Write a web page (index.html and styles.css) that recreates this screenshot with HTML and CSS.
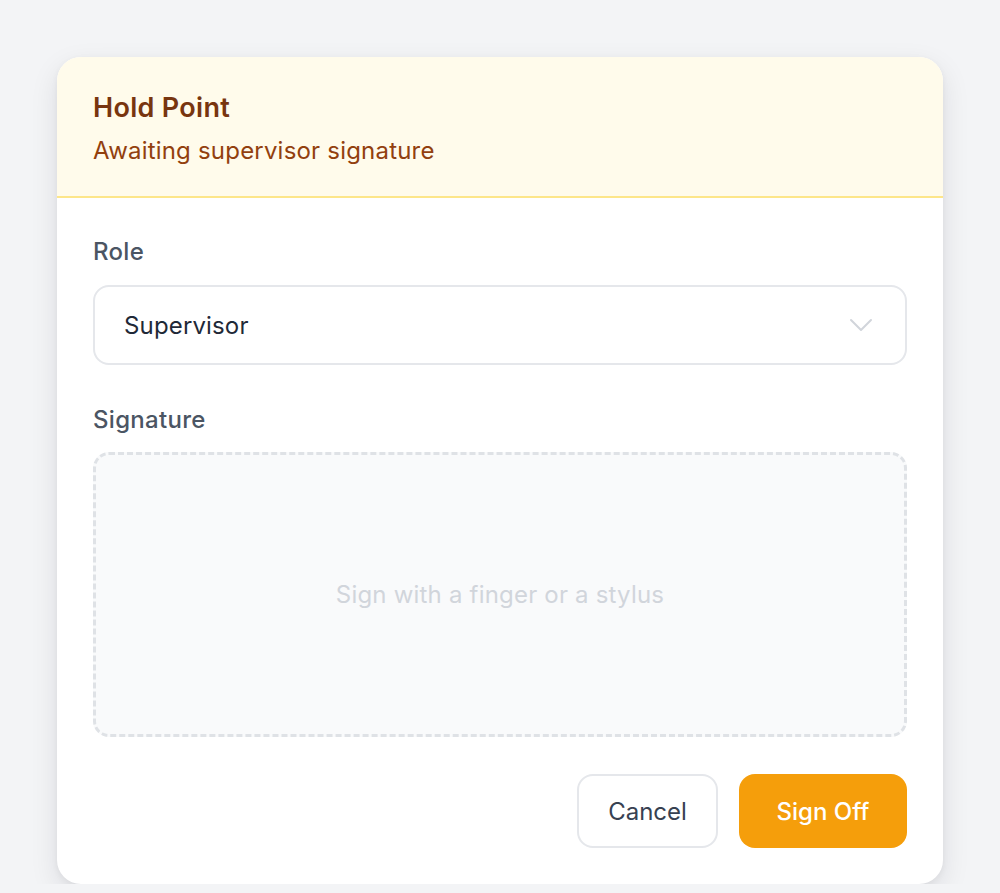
FILE: index.html
```html
<!DOCTYPE html>
<html>
  <head>
    <title>Hold Point</title>
    <link rel="stylesheet" href="styles.css">
  </head>
  <body>
    <div class="card">
      <div class="card-header">
        <h2 class="card-title">Hold Point</h2>
        <p class="card-subtitle">Awaiting supervisor signature</p>
      </div>
      <div class="card-body">
        <label class="field-label" for="role">Role</label>
        <div class="select">
          <span class="select-value" id="role">Supervisor</span>
          <svg class="select-chevron" width="24" height="14" viewBox="0 0 24 14" fill="none">
            <path d="M2 2l10 10L22 2" stroke="#d1d5db" stroke-width="2" stroke-linecap="round" stroke-linejoin="round"/>
          </svg>
        </div>

        <label class="field-label field-label-spaced">Signature</label>
        <div class="signature-pad">
          <span class="signature-hint">Sign with a finger or a stylus</span>
        </div>

        <div class="actions">
          <button class="btn btn-secondary">Cancel</button>
          <button class="btn btn-primary">Sign Off</button>
        </div>
      </div>
    </div>
  </body>
</html>
```

FILE: styles.css
```css
body {
  margin: 0;
  padding: 57px 57px 0;
  background-color: #f3f4f6;
  font-family: Inter, "Noto Sans", sans-serif;
}

.card {
  background-color: #fff;
  border-radius: 24px;
  overflow: hidden;
  box-shadow: 0 10px 28px rgba(17, 24, 39, 0.1), 0 2px 6px rgba(17, 24, 39, 0.05);
}

.card-header {
  background-color: #fffbeb;
  border-bottom: 2px solid #fde68a;
  padding: 33px 36px 29px;
}

.card-title {
  margin: 0;
  font-size: 27px;
  line-height: 36px;
  font-weight: 600;
  letter-spacing: 0.3px;
  color: #78350f;
}

.card-subtitle {
  margin: 9px 0 0;
  font-size: 24px;
  line-height: 32px;
  letter-spacing: 0.2px;
  color: #92400e;
}

.card-body {
  padding: 38px 36px 36px;
}

.field-label {
  display: block;
  font-size: 24px;
  line-height: 32px;
  font-weight: 500;
  letter-spacing: 0.3px;
  color: #4b5563;
  margin-bottom: 17px;
}

.field-label-spaced {
  margin-top: 39px;
  margin-bottom: 16px;
}

.select {
  display: flex;
  align-items: center;
  justify-content: space-between;
  height: 80px;
  box-sizing: border-box;
  border: 2px solid #e5e7eb;
  border-radius: 16px;
  padding: 0 32px 0 29px;
}

.select-value {
  font-size: 24px;
  letter-spacing: 0.15px;
  color: #1f2937;
}

.signature-pad {
  display: flex;
  align-items: center;
  justify-content: center;
  height: 285px;
  box-sizing: border-box;
  border: 3px dashed #dfe2e6;
  border-radius: 16px;
  background-color: #f9fafb;
}

.signature-hint {
  font-size: 24px;
  letter-spacing: 0.2px;
  color: #d1d5db;
}

.actions {
  display: flex;
  justify-content: flex-end;
  gap: 21px;
  margin-top: 37px;
}

.btn {
  font-family: inherit;
  font-size: 24px;
  height: 74px;
  border-radius: 16px;
  cursor: pointer;
}

.btn-secondary {
  width: 141px;
  background-color: #fff;
  border: 2px solid #e5e7eb;
  color: #374151;
}

.btn-primary {
  width: 168px;
  background-color: #f59e0b;
  border: 0;
  color: #fff;
  font-weight: 500;
}
```
